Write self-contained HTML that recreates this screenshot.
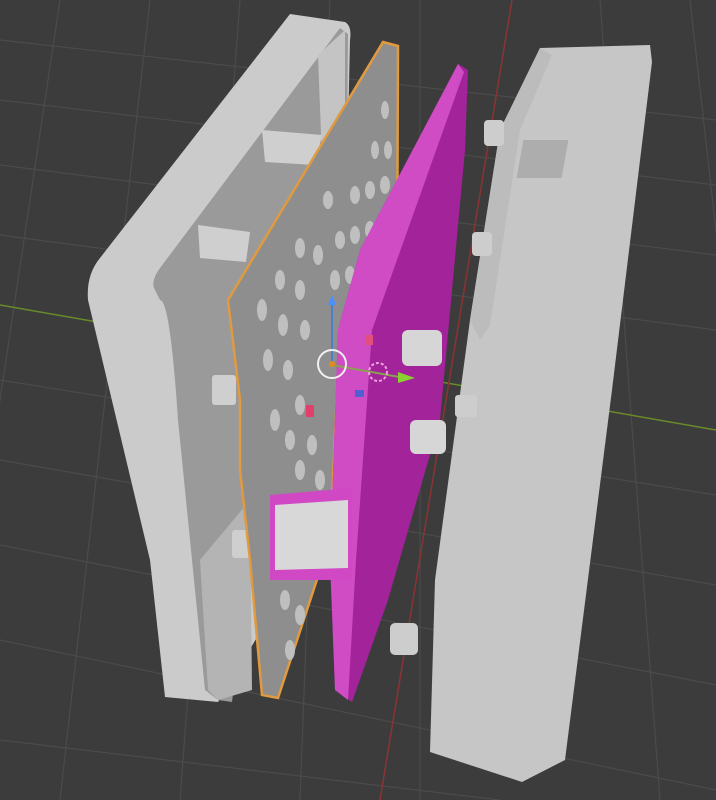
<!DOCTYPE html>
<html><head><style>html,body{margin:0;padding:0;background:#3c3c3c;overflow:hidden}svg{display:block}</style></head>
<body>
<svg width="716" height="800" viewBox="0 0 716 800" xmlns="http://www.w3.org/2000/svg">
<rect width="716" height="800" fill="#3c3c3c"/>
<g stroke="#4b4b4b" stroke-width="1.2">
<line x1="0" y1="40" x2="716" y2="120"/><line x1="0" y1="100" x2="716" y2="185"/>
<line x1="0" y1="165" x2="716" y2="255"/><line x1="0" y1="235" x2="716" y2="330"/>
<line x1="0" y1="380" x2="716" y2="495"/><line x1="0" y1="460" x2="716" y2="585"/>
<line x1="0" y1="545" x2="716" y2="685"/><line x1="0" y1="640" x2="716" y2="790"/>
<line x1="0" y1="740" x2="500" y2="800"/>
<line x1="60" y1="0" x2="-60" y2="800"/><line x1="150" y1="0" x2="60" y2="800"/>
<line x1="240" y1="0" x2="180" y2="800"/><line x1="330" y1="0" x2="300" y2="800"/>
<line x1="420" y1="0" x2="420" y2="800"/><line x1="600" y1="0" x2="660" y2="800"/>
<line x1="690" y1="0" x2="780" y2="800"/>
</g>
<line x1="0" y1="305" x2="716" y2="430" stroke="#6a8a2a" stroke-width="1.5"/>
<line x1="512" y1="0" x2="380" y2="800" stroke="#8a3434" stroke-width="1.5"/>

<!-- right case -->
<polygon points="540,48 650,45 652,62 612,390 565,760 522,782 430,752 435,580 470,320 500,130" fill="#c6c6c6"/>
<polygon points="470,320 500,130 540,48 552,55 520,130 490,325 480,340" fill="#bcbcbc"/>
<rect x="548" y="140" width="45" height="38" fill="#adadad" transform="skewX(-10)"/>
<rect x="484" y="120" width="20" height="26" rx="4" fill="#cdcdcd"/>
<rect x="472" y="232" width="20" height="24" rx="4" fill="#cdcdcd"/>
<rect x="455" y="395" width="22" height="22" rx="3" fill="#cdcdcd"/>
<rect x="390" y="623" width="28" height="32" rx="5" fill="#cdcdcd"/>

<!-- left case -->
<path d="M290,14 L345,22 Q352,26 350,40 L340,500 L218,702 L165,697 L150,560 L88,300 Q86,275 100,258 Z" fill="#cbcbcb"/>
<path d="M340,28 L348,34 L345,400 L250,560 L232,702 L218,700 L205,690 L178,420 Q170,300 160,300 L155,290 Q150,282 160,268 Z" fill="#9a9a9a"/>
<polygon points="200,560 250,500 252,690 218,700 208,690" fill="#b4b4b4"/>
<polygon points="318,55 345,30 345,150 322,160" fill="#c4c4c4"/>
<polygon points="262,130 322,135 315,165 265,162" fill="#cfcfcf"/>
<polygon points="198,225 250,232 246,262 200,258" fill="#cfcfcf"/>
<rect x="232" y="530" width="22" height="28" rx="3" fill="#cfcfcf"/>
<rect x="212" y="375" width="24" height="30" rx="3" fill="#cfcfcf"/>

<!-- perforated plate -->
<polygon points="383,42 398,46 397,300 340,330 330,540 278,698 262,695 250,560 240,470 240,400 228,300" fill="#8e8e8e" stroke="#e09a40" stroke-width="2.5"/>
<g fill="#bfbfbf">
<ellipse cx="385" cy="110" rx="4" ry="9"/><ellipse cx="375" cy="150" rx="4" ry="9"/><ellipse cx="388" cy="150" rx="4" ry="9"/>
<ellipse cx="355" cy="195" rx="5" ry="9"/><ellipse cx="370" cy="190" rx="5" ry="9"/><ellipse cx="385" cy="185" rx="5" ry="9"/>
<ellipse cx="328" cy="200" rx="5" ry="9"/><ellipse cx="340" cy="240" rx="5" ry="9"/><ellipse cx="355" cy="235" rx="5" ry="9"/>
<ellipse cx="370" cy="230" rx="5" ry="9"/><ellipse cx="385" cy="225" rx="5" ry="9"/><ellipse cx="300" cy="248" rx="5" ry="10"/>
<ellipse cx="318" cy="255" rx="5" ry="10"/><ellipse cx="335" cy="280" rx="5" ry="10"/><ellipse cx="350" cy="275" rx="5" ry="9"/>
<ellipse cx="280" cy="280" rx="5" ry="10"/><ellipse cx="300" cy="290" rx="5" ry="10"/><ellipse cx="262" cy="310" rx="5" ry="11"/>
<ellipse cx="283" cy="325" rx="5" ry="11"/><ellipse cx="305" cy="330" rx="5" ry="10"/><ellipse cx="268" cy="360" rx="5" ry="11"/>
<ellipse cx="288" cy="370" rx="5" ry="10"/><ellipse cx="300" cy="405" rx="5" ry="10"/><ellipse cx="275" cy="420" rx="5" ry="11"/>
<ellipse cx="290" cy="440" rx="5" ry="10"/><ellipse cx="312" cy="445" rx="5" ry="10"/><ellipse cx="300" cy="470" rx="5" ry="10"/>
<ellipse cx="320" cy="480" rx="5" ry="10"/><ellipse cx="285" cy="600" rx="5" ry="10"/><ellipse cx="300" cy="615" rx="5" ry="10"/>
<ellipse cx="290" cy="650" rx="5" ry="10"/>
</g>

<!-- magenta board -->
<polygon points="458,64 468,70 465,150 440,420 388,600 352,702 335,690 330,560 338,330 360,250" fill="#a2239a"/>
<polygon points="458,64 464,72 372,330 356,560 348,700 335,690 330,560 338,330 360,250" fill="#cf4cc4"/>
<polygon points="270,495 352,488 352,580 270,580" fill="#d048c4"/>
<polygon points="275,505 348,500 348,568 275,570" fill="#d8d8d8"/>
<rect x="402" y="330" width="40" height="36" rx="6" fill="#d6d6d6"/>
<rect x="410" y="420" width="36" height="34" rx="6" fill="#d6d6d6"/>

<!-- gizmo -->
<line x1="332" y1="365" x2="332" y2="305" stroke="#4a7fd0" stroke-width="2"/>
<polygon points="328,305 336,305 332,295" fill="#4a90ff"/>
<line x1="332" y1="365" x2="405" y2="378" stroke="#8aa050" stroke-width="2"/>
<polygon points="398,372 415,378 398,383" fill="#8ad030"/>
<circle cx="332" cy="364" r="14" fill="none" stroke="#f0f0f0" stroke-width="2"/>
<circle cx="332" cy="364" r="3" fill="#e08a20"/>
<circle cx="378" cy="372" r="9" fill="none" stroke="#f0a0e0" stroke-width="2" stroke-dasharray="3 2"/>
<rect x="306" y="405" width="8" height="12" fill="#e0406a"/>
<rect x="365" y="335" width="8" height="10" fill="#e0507a"/>
<rect x="355" y="390" width="9" height="7" fill="#5060d0"/>
</svg>
</body></html>
